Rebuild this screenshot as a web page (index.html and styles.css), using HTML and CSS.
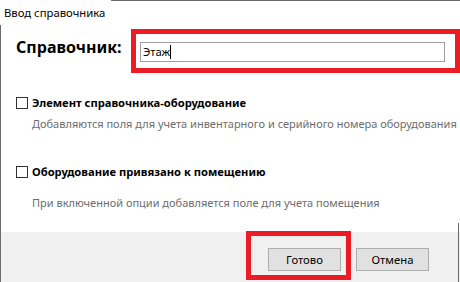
FILE: index.html
```html
<!DOCTYPE html>
<html lang="ru">
<head>
    <meta charset="UTF-8">
    <title>Ввод справочника</title>
    <link rel="stylesheet" href="styles.css">
</head>
<body>
    <div class="window">
        <header class="titlebar">
            <span class="title">Ввод справочника</span>
            <span class="edge"></span>
        </header>

        <main class="content">
            <div class="name-row">
                <label class="name-label" for="name">Справочник:</label>
                <div class="mark mark-input">
                    <div class="text-input" id="name">Этаж<span class="caret"></span></div>
                </div>
            </div>

            <div class="option option-first">
                <label class="option-label"><span class="checkbox"></span>Элемент справочника-оборудование</label>
                <p class="option-hint hint-first">Добавляются поля для учета инвентарного и серийного номера оборудования</p>
            </div>

            <div class="option option-second">
                <label class="option-label"><span class="checkbox"></span>Оборудование привязано к помещению</label>
                <p class="option-hint hint-second">При включенной опции добавляется поле для учета помещения</p>
            </div>
        </main>

        <footer class="footer">
            <div class="mark mark-button">
                <button class="btn">Готово</button>
            </div>
            <button class="btn btn-cancel">Отмена</button>
        </footer>

        <span class="side-edge"></span>
    </div>
</body>
</html>
```

FILE: styles.css
```css
:root {
    --mark-color: #ed1c24;
    --frame-color: #6b6b6b;
    --hint-color: #6d6d6d;
    --panel-color: #f0f0f0;
}

* {
    margin: 0;
    padding: 0;
    box-sizing: border-box;
}

body {
    font-family: "Noto Sans", "Open Sans", sans-serif;
    font-size: 11px;
    color: #000;
    background: #fff;
    width: 460px;
    height: 282px;
    overflow: hidden;
}

.window {
    position: relative;
    display: flex;
    flex-direction: column;
    height: 282px;
}

.titlebar {
    display: flex;
    height: 25px;
}

.title {
    padding: 5px 0 0 4px;
    font-size: 11.3px;
    line-height: 16px;
}

.edge {
    flex: 1;
    margin-left: 6px;
    border-top: 1px solid var(--frame-color);
}

.content {
    flex: 1;
    border-left: 1px solid var(--frame-color);
}

.name-row {
    display: flex;
    align-items: center;
    margin-top: 4px;
    padding-left: 15px;
}

.name-label {
    width: 115px;
    font-size: 16px;
    font-weight: bold;
    line-height: 20px;
    margin-top: -8px;
}

.mark {
    border: 5px solid var(--mark-color);
}

.mark-input {
    flex: 1;
    padding: 8px 10px 6px 4px;
}

.text-input {
    height: 20px;
    border: 1px solid #a0a0a0;
    padding-left: 2px;
    font-size: 11.3px;
    line-height: 18px;
}

.caret {
    display: inline-block;
    width: 1px;
    height: 14px;
    background: #000;
    vertical-align: -3px;
}

.option {
    padding-left: 15px;
}

.option-first {
    margin-top: 22px;
}

.option-second {
    margin-top: 32px;
}

.option-label {
    display: flex;
    align-items: center;
    gap: 4px;
    font-weight: bold;
    font-size: 11.2px;
    line-height: 16px;
}

.checkbox {
    width: 12px;
    height: 12px;
    border: 1px solid #333;
    background: #fff;
}

.option-hint {
    padding-left: 16px;
    color: var(--hint-color);
    line-height: 16px;
    white-space: nowrap;
}

.hint-first {
    margin-top: 5px;
}

.hint-second {
    margin-top: 15px;
}

.footer {
    display: flex;
    justify-content: flex-end;
    align-items: flex-start;
    gap: 5px;
    height: 50px;
    padding-right: 31px;
    background: var(--panel-color);
    border-left: 1px solid var(--frame-color);
}

.mark-button {
    margin-top: -1px;
    padding: 12px 5px 4px 17px;
}

.btn {
    width: 73px;
    height: 23px;
    font-family: inherit;
    font-size: 11.3px;
    color: #000;
    background: #e1e1e1;
    border: 1px solid #adadad;
}

.btn-cancel {
    margin-top: 16px;
}

.side-edge {
    position: absolute;
    top: 223px;
    bottom: 0;
    left: 458px;
    width: 1px;
    background: var(--frame-color);
}
```
